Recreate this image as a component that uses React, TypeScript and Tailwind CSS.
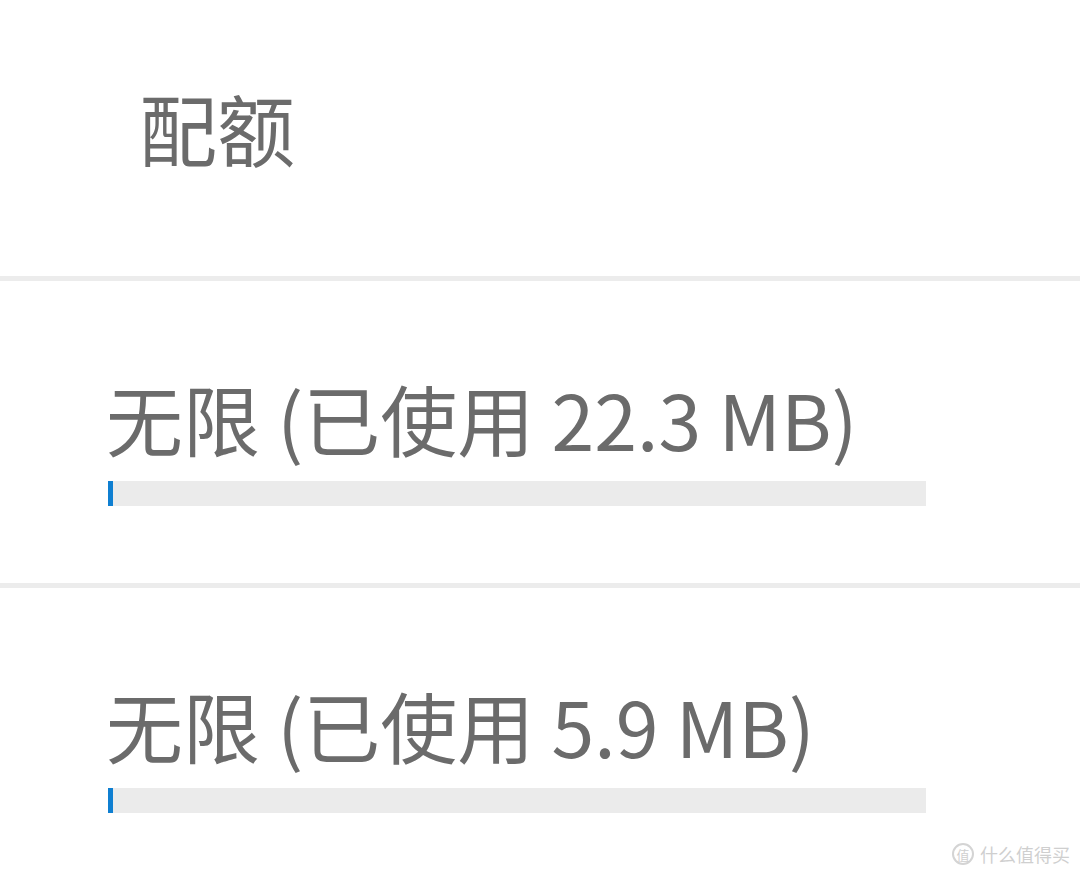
import React from 'react';

interface QuotaRow {
  id: string;
  used: string;
}

const rows: QuotaRow[] = [
  { id: 'a', used: '22.3 MB' },
  { id: 'b', used: '5.9 MB' },
];

const font = { fontFamily: '"Noto Sans CJK SC", "Noto Sans", sans-serif' };

const App: React.FC = () => {
  return (
    <div className="relative w-[1080px] h-[875px] bg-white overflow-hidden text-[#6b6b6b]" style={font}>
      {/* header */}
      <div className="h-[276px] pl-[139px] pt-[88px]">
        <span className="block text-[78px] leading-none">配额</span>
      </div>
      <div className="h-[5px] bg-[#ececec]" />

      {rows.map((row, i) => (
        <div key={row.id}>
          <div className="pl-[106px] pt-[98px] pb-[77px]">
            <div className="text-[77px] leading-none whitespace-nowrap">无限 (已使用 {row.used})</div>
            <div className="mt-[25px] ml-[2px] h-[25px] w-[818px] bg-[#ebebeb] flex">
              <div className="h-full w-[5px] bg-[#0f7fd1]" />
            </div>
          </div>
          {i < rows.length - 1 && <div className="h-[5px] bg-[#ececec]" />}
        </div>
      ))}

      {/* watermark */}
      <div className="absolute right-[10px] bottom-[10px] flex items-center gap-[6px] text-[#cfcfcf]">
        <div className="w-[22px] h-[22px] rounded-full border-2 border-[#d4d4d4] flex items-center justify-center text-[13px] leading-none">值</div>
        <span className="text-[18px] leading-none">什么值得买</span>
      </div>
    </div>
  );
};

export default App;
